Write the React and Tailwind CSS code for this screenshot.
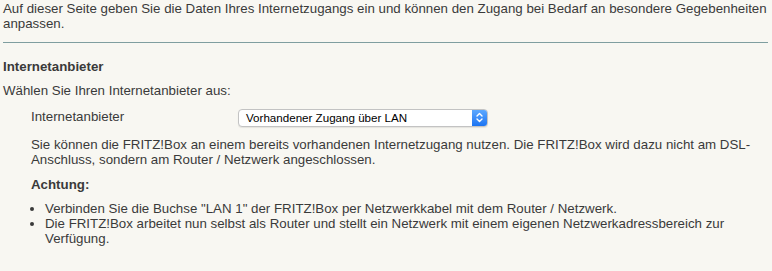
export default function App() {
  return (
    <div className="h-[271px] w-[772px] overflow-hidden bg-[#f8f7f2] pl-[3px] pr-[4px] pt-[2px] text-[13.3px] leading-[14.5px] text-[#3a3a3a] font-['Helvetica','Liberation_Sans',Arial,sans-serif]">
      <p>
        Auf dieser Seite geben Sie die Daten Ihres Internetzugangs ein und können den Zugang bei Bedarf an besondere Gegebenheiten
        anpassen.
      </p>
      <div className="mt-[11px] h-px bg-[#7f9ea0]" />

      <h4 className="mt-[17px] font-bold">Internetanbieter</h4>
      <p className="mt-[9px]">Wählen Sie Ihren Internetanbieter aus:</p>

      <div className="ml-[28px] mt-[10px] flex h-[19px] items-center">
        <span className="w-[207px]">Internetanbieter</span>
        <div className="flex h-[18px] w-[250px] items-stretch overflow-hidden rounded-[4px] border border-[#c3c3c3] bg-white shadow-[0_1px_1px_rgba(0,0,0,0.08)]">
          <span className="flex-1 pl-[7px] text-[11.6px] leading-[16px] text-black">Vorhandener Zugang über LAN</span>
          <span className="flex w-[15px] items-center justify-center bg-gradient-to-b from-[#5ca8ff] to-[#1a73f2]">
            <svg width="7" height="11" viewBox="0 0 7 11" fill="none" stroke="white" strokeWidth="1.4" strokeLinecap="round" strokeLinejoin="round">
              <path d="M1 4 L3.5 1.5 L6 4" />
              <path d="M1 7 L3.5 9.5 L6 7" />
            </svg>
          </span>
        </div>
      </div>

      <div className="ml-[28px] mt-[11px]">
        <p>
          Sie können die FRITZ!Box an einem bereits vorhandenen Internetzugang nutzen. Die FRITZ!Box wird dazu nicht am DSL-
          <br />
          Anschluss, sondern am Router / Netzwerk angeschlossen.
        </p>
        <p className="mt-[11px] font-bold">Achtung:</p>
        <ul className="mt-[9px] ml-[9px] list-disc pl-[5px] marker:text-[#3a3a3a]">
          <li>Verbinden Sie die Buchse "LAN 1" der FRITZ!Box per Netzwerkkabel mit dem Router / Netzwerk.</li>
          <li className="mt-[1px]">
            Die FRITZ!Box arbeitet nun selbst als Router und stellt ein Netzwerk mit einem eigenen Netzwerkadressbereich zur
            <br />
            Verfügung.
          </li>
        </ul>
      </div>
    </div>
  );
}
